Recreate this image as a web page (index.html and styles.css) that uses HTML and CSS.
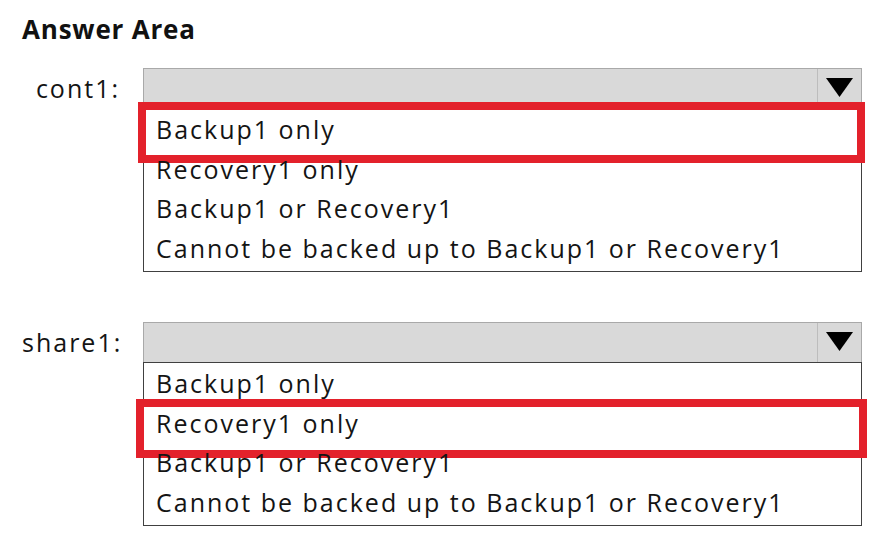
FILE: index.html
```html
<!DOCTYPE html>
<html lang="en">
<head>
<meta charset="utf-8">
<title>Answer Area</title>
<link rel="stylesheet" href="styles.css">
</head>
<body>
<main class="page">
  <h1 class="title">Answer Area</h1>

  <div class="row">
    <div class="label">cont1:</div>
    <div class="dropdown">
      <div class="select">
        <div class="select-value"></div>
        <div class="select-arrow">
          <svg width="27" height="19" viewBox="0 0 27 19"><polygon points="0,0 27,0 13.5,19" fill="#000"/></svg>
        </div>
      </div>
      <ul class="options">
        <li class="option selected sel-a">Backup1 only</li>
        <li class="option">Recovery1 only</li>
        <li class="option">Backup1 or Recovery1</li>
        <li class="option">Cannot be backed up to Backup1 or Recovery1</li>
      </ul>
    </div>
  </div>

  <div class="row row-second">
    <div class="label">share1:</div>
    <div class="dropdown">
      <div class="select">
        <div class="select-value"></div>
        <div class="select-arrow">
          <svg width="27" height="19" viewBox="0 0 27 19"><polygon points="0,0 27,0 13.5,19" fill="#000"/></svg>
        </div>
      </div>
      <ul class="options">
        <li class="option">Backup1 only</li>
        <li class="option selected sel-b">Recovery1 only</li>
        <li class="option">Backup1 or Recovery1</li>
        <li class="option">Cannot be backed up to Backup1 or Recovery1</li>
      </ul>
    </div>
  </div>
</main>
</body>
</html>
```

FILE: styles.css
```css
html, body {
  margin: 0;
  padding: 0;
  background: #ffffff;
}

body {
  font-family: "Open Sans", "Liberation Sans", sans-serif;
  color: #141414;
}

.page {
  padding: 14px 0 0 22px;
}

.title {
  margin: 0 0 24px 0;
  font-size: 26px;
  line-height: 30px;
  font-weight: 700;
  letter-spacing: 0.8px;
  color: #111111;
}

.row {
  display: flex;
  align-items: flex-start;
}

.row-second {
  margin-top: 50px;
}

.label {
  width: 98px;
  text-align: right;
  font-size: 25px;
  letter-spacing: 2px;
  line-height: 40px;
  margin-right: 23px;
}

.dropdown {
  width: 719px;
}

.select {
  display: flex;
  height: 39px;
  background: #d9d9d9;
  border: 1px solid #a9a9a9;
  border-bottom: none;
}

.select-value {
  flex: 1;
}

.select-arrow {
  width: 44px;
  border-left: 1px solid #bdbdbd;
  display: flex;
  align-items: flex-start;
  justify-content: center;
  padding-top: 9px;
  box-sizing: border-box;
}

.options {
  list-style: none;
  margin: 0;
  padding: 1px 0 3px 0;
  border: 1px solid #404040;
  background: #ffffff;
}

.option {
  position: relative;
  height: 39.5px;
  line-height: 39.5px;
  padding-left: 12px;
  font-size: 25px;
  letter-spacing: 2px;
  white-space: nowrap;
}

.selected::after {
  content: "";
  position: absolute;
  border: 8px solid #e3212b;
}

.sel-a::after {
  top: -8px;
  bottom: -13px;
  left: -6px;
  right: -4px;
}

.sel-b::after {
  top: -5px;
  bottom: -15px;
  left: -8px;
  right: -6px;
}
```
